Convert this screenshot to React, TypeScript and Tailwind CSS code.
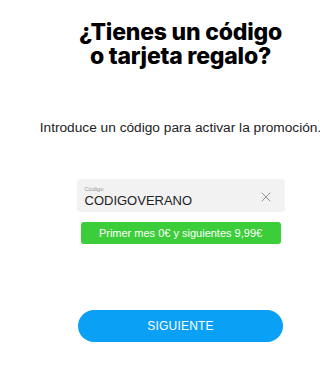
import { X } from 'lucide-react';

export default function App() {
  return (
    <div className="w-[320px] h-[372px] overflow-hidden bg-white">
      <div className="w-[361px] flex flex-col items-center pt-[20px]">
        <h1
          className="text-[23px] leading-[24px] font-extrabold text-black text-center tracking-[-0.2px]"
          style={{ fontFamily: '"Inter", "Noto Sans", sans-serif' }}
        >
          ¿Tienes un código
          <br />
          o tarjeta regalo?
        </h1>

        <p
          className="mt-[52px] text-[13.7px] leading-[16px] text-[#222] whitespace-nowrap"
          style={{ fontFamily: '"Liberation Sans", Arial, sans-serif' }}
        >
          Introduce un código para activar la promoción.
        </p>

        <div
          className="mt-[43px] w-[208px] flex flex-col items-center"
          style={{ fontFamily: '"Liberation Sans", Arial, sans-serif' }}
        >
          <div className="w-full h-[33px] rounded-[4px] bg-[#f2f2f2] flex items-center pl-[8px] pr-[11px]">
            <div className="flex-1 flex flex-col pt-[1px]">
              <span className="text-[6px] leading-[8px] text-[#999]">Código</span>
              <span className="text-[13px] leading-[15px] text-[#222]">CODIGOVERANO</span>
            </div>
            <X className="w-[16px] h-[16px] text-[#8a8a8a] mt-[2px]" strokeWidth={1.4} />
          </div>

          <div className="mt-[10px] w-[200px] h-[22px] rounded-[3px] bg-[#3ccd3a] flex items-center justify-center text-white text-[11px]">
            Primer mes 0€ y siguientes 9,99€
          </div>
        </div>

        <button
          className="mt-[66px] w-[205px] h-[32px] rounded-full bg-[#0aa0f5] text-white text-[12px] tracking-[0.2px]"
          style={{ fontFamily: '"Liberation Sans", Arial, sans-serif' }}
        >
          SIGUIENTE
        </button>
      </div>
    </div>
  );
}
